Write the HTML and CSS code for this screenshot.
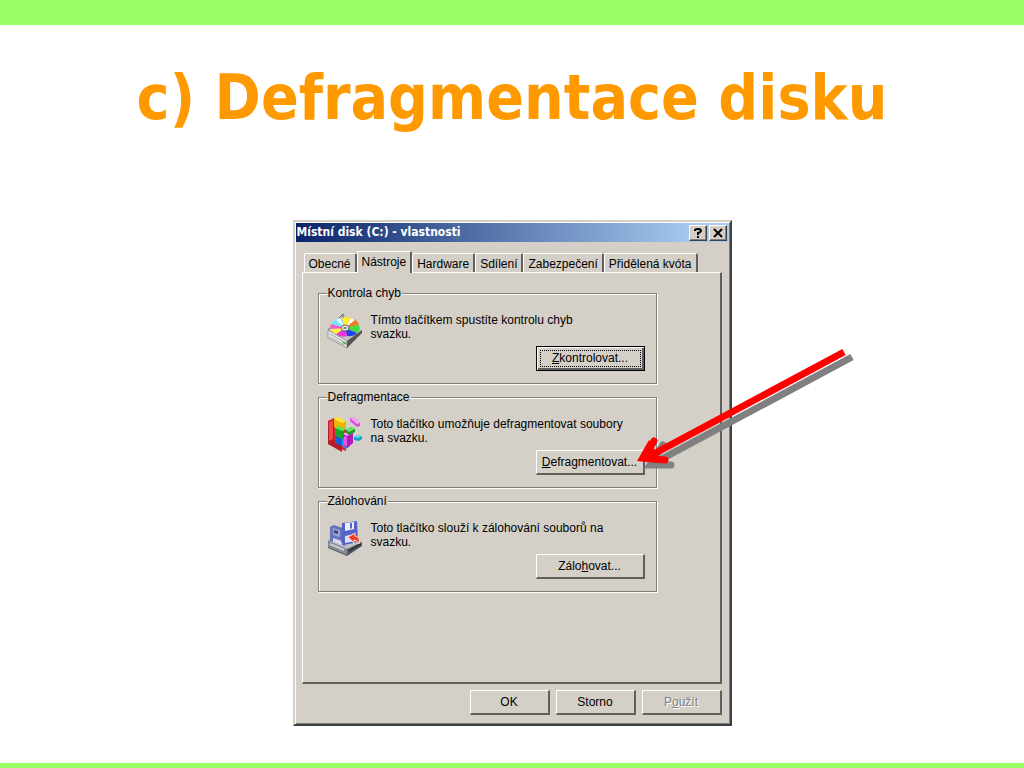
FILE: index.html
```html
<!DOCTYPE html>
<html lang="cs">
<head>
<meta charset="utf-8">
<title>c) Defragmentace disku</title>
<link rel="stylesheet" href="styles.css">
</head>
<body>
<main class="slide">
  <h1 class="slide-title">c) Defragmentace disku</h1>
  <section class="dialog" aria-labelledby="dialog-title">
    <header class="titlebar">
      <h2 class="titlebar-text" id="dialog-title">Místní disk (C:) - vlastnosti</h2>
      <button class="caption-button" type="button" aria-label="Nápověda">
        <svg width="10" height="10" viewBox="0 0 10 10"><path d="M2 3V2Q2 1 5 1T8 3Q8 4 5 5V7M5 8V10" fill="none" stroke="#000" stroke-width="2"/></svg>
      </button>
      <button class="caption-button" type="button" aria-label="Zavřít">
        <svg width="10" height="10" viewBox="0 0 10 10"><path d="M1 1L9 9M9 1L1 9" fill="none" stroke="#000" stroke-width="2"/></svg>
      </button>
    </header>
    <div class="dialog-body">
      <div class="tabs" role="tablist">
        <button class="tab" type="button" role="tab">Obecné</button>
        <button class="tab tab-selected" type="button" role="tab" aria-selected="true">Nástroje</button>
        <button class="tab" type="button" role="tab">Hardware</button>
        <button class="tab" type="button" role="tab">Sdílení</button>
        <button class="tab" type="button" role="tab">Zabezpečení</button>
        <button class="tab" type="button" role="tab">Přidělená kvóta</button>
      </div>
      <div class="panel" role="tabpanel">
        <fieldset class="group">
          <legend class="group-title">Kontrola chyb</legend>
          <svg class="group-icon" viewBox="0 0 36 36" aria-hidden="true">
            <path d="M1 17L16 0L35 17L20 29Z" fill="#c4c5c0"/>
            <path d="M1 17L16 1V5" fill="none" stroke="#666"/>
            <path d="M1 17L20 28V35L1 25Z" fill="#e4e4e4" stroke="#999"/>
            <path d="M20 28L35 17V20L20 35Z" fill="#555"/>
            <path d="M3 21L17 29M3 24L17 32" stroke="#aaa"/>
            <path d="M16 29L19 31" stroke="#3b3" stroke-width="2"/>
            <path d="M18 15L4 11Q8 5 15 5Z" fill="#69e8ff"/>
            <path d="M18 15L15 5Q20 3 24 5Z" fill="#ffee28"/>
            <path d="M18 15L24 5Q31 7 32 12Z" fill="#ef7c24"/>
            <path d="M18 15L32 12Q34 17 30 20Z" fill="#42dc48"/>
            <path d="M18 15L30 20Q26 24 20 23Z" fill="#283ff0"/>
            <path d="M18 15L20 23Q14 25 9 21Z" fill="#ef34dc"/>
            <path d="M18 15L9 21Q2 18 4 11Z" fill="#fff23c"/>
            <path d="M18 15L4 16Q3 13 4 11Z" fill="#f75bd4"/>
            <path d="M9 7L13 5L18 15ZM24 5L28 7L18 15Z" fill="#fff"/>
            <ellipse cx="18" cy="15" rx="4" ry="3" fill="#eee" stroke="#666"/>
            <ellipse cx="18" cy="15" rx="2" ry="1" fill="#777"/>
          </svg>
          <div class="group-content">
            <p class="group-text">Tímto tlačítkem spustíte kontrolu chyb<br>svazku.</p>
            <button class="button button-default" type="button"><span class="button-focus"><u>Z</u>kontrolovat...</span></button>
          </div>
        </fieldset>
        <fieldset class="group">
          <legend class="group-title">Defragmentace</legend>
          <svg class="group-icon" viewBox="0 0 36 36" aria-hidden="true">
            <path d="M1 4L7 1L19 9V34L1 27Z" fill="#e32334"/>
            <path d="M1 4V27L15 35V28L7 23V2Z" fill="#b71d29"/>
            <path d="M2 5L6 3V22L2 24Z" fill="#f04848"/>
            <path d="M7 2L10 0L19 4V12L14 14L7 10Z" fill="#efb400"/>
            <path d="M7 2L10 0L19 4L15 6Z" fill="#ffe83e"/>
            <path d="M8 11L16 14V22L8 19Z" fill="#18a829"/>
            <path d="M8 11L12 9L19 12L16 14Z" fill="#5ce652"/>
            <path d="M8 19L16 22V29L8 26Z" fill="#1260dc"/>
            <path d="M15 22L19 20L23 22V29L19 32L15 29Z" fill="#259cf2"/>
            <path d="M16 17L21 14L26 16V26L20 31L17 29V20Z" fill="#b318bd"/>
            <path d="M16 17L21 14L26 16L20 19Z" fill="#ffa6fa"/>
            <path d="M17 19L20 20V30L17 28Z" fill="#e655e8"/>
            <path d="M19 13L24 10L28 12V15L22 18L19 16Z" fill="#179d24"/>
            <path d="M19 13L24 10L28 12L22 15Z" fill="#68e26b"/>
            <path d="M23 1L26 0L33 6V9L30 10L23 4Z" fill="#d74ee0"/>
            <path d="M23 1L26 0L33 6L30 7Z" fill="#ff9cff"/>
            <path d="M27 20L31 18L35 19V22L32 24L27 23Z" fill="#189fc7"/>
            <path d="M27 20L31 18L35 19L31 21Z" fill="#63dff2"/>
          </svg>
          <div class="group-content">
            <p class="group-text">Toto tlačítko umožňuje defragmentovat soubory<br>na svazku.</p>
            <button class="button" type="button"><u>D</u>efragmentovat...</button>
          </div>
        </fieldset>
        <fieldset class="group">
          <legend class="group-title">Zálohování</legend>
          <svg class="group-icon" viewBox="0 0 36 36" aria-hidden="true">
            <path d="M1 20L7 15L35 21V25L20 35L1 27Z" fill="#555a66"/>
            <path d="M1 20L12 15L35 21L20 28Z" fill="#bfc2c5"/>
            <path d="M1 20L20 28V34L1 26Z" fill="#858a92"/>
            <path d="M3 23L17 29" stroke="#c8cacd" stroke-width="2"/>
            <path d="M22 30L34 23" stroke="#333" stroke-width="2"/>
            <path d="M3 6L7 4L18 8V25L3 20Z" fill="#6674b8"/>
            <path d="M6 7L13 9V16L6 14Z" fill="#9aa4ce"/>
            <path d="M7 9L11 10V13L7 12Z" fill="#374187"/>
            <path d="M6 17L15 20V24L6 21Z" fill="#d5d9ed"/>
            <path d="M15 2L30 0L31 21L17 24L14 21Z" fill="#5662c9"/>
            <path d="M18 2L27 1V8L18 10Z" fill="#eef1ff"/>
            <path d="M23 2L25 2V7L23 8Z" fill="#5663b0"/>
            <path d="M18 15L28 13V20L18 22Z" fill="#dce1f7"/>
            <path d="M21 16L28 12V15Q34 16 32 23Q30 19 27 19V22Z" fill="#f04125" stroke="#ffd6cc" stroke-width="1"/>
          </svg>
          <div class="group-content">
            <p class="group-text">Toto tlačítko slouží k zálohování souborů na<br>svazku.</p>
            <button class="button" type="button">Zálo<u>h</u>ovat...</button>
          </div>
        </fieldset>
      </div>
      <footer class="actions">
        <button class="button action" type="button">OK</button>
        <button class="button action" type="button">Storno</button>
        <button class="button action" type="button" disabled>P<u>o</u>užít</button>
      </footer>
    </div>
    <svg class="pointer" width="230" height="140" viewBox="0 0 230 140" aria-hidden="true">
      <g fill="none" stroke="#808080" stroke-width="7">
        <path d="M222 17L26 122"/>
        <path d="M33 105L20 125L41 125" stroke-linecap="round"/>
      </g>
      <g fill="none" stroke="#f00" stroke-width="7">
        <path d="M214 12L18 117"/>
        <path d="M24 101L14 118L35 120" stroke-linecap="round"/>
      </g>
      <path d="M7 121L19 100L32 123Z" fill="#f00"/>
    </svg>
  </section>
</main>
</body>
</html>
```
FILE: styles.css
```css
* {
  box-sizing: border-box;
}

body {
  margin: 0;
  background: #fff;
}

.slide {
  display: flex;
  flex-direction: column;
  align-items: center;
  min-height: 100vh;
  padding-bottom: 36px;
  border-top: 25px solid #9f6;
  border-bottom: 5px solid #9f6;
}

.slide-title {
  margin: 35px 0 84px;
  color: #f90;
  font: bold 62px/76px "DejaVu Sans Condensed", "DejaVu Sans", sans-serif;
  text-align: center;
}

.dialog {
  position: relative;
  width: 100%;
  max-width: 439px;
  padding: 1px;
  border: 2px solid;
  border-color: #d4d0c8 #404040 #404040 #d4d0c8;
  box-shadow: inset 1px 1px #fff, inset -1px -1px #808080;
  background: #d4d0c8;
  color: #000;
  font: 12px/14px "Liberation Sans", Arial, sans-serif;
}

.titlebar {
  display: flex;
  align-items: center;
  height: 19px;
  padding: 0 2px 0 1px;
  background: linear-gradient(to right, #0a246a, #a6caf0 92%);
}

.titlebar-text {
  flex: 1;
  margin: 0;
  color: #fff;
  font: bold 12px/19px "DejaVu Sans Condensed", "DejaVu Sans", sans-serif;
}

.caption-button {
  display: flex;
  align-items: center;
  justify-content: center;
  width: 18px;
  height: 16px;
  padding: 0;
  border: 1px solid;
  border-color: #fff #404040 #404040 #fff;
  box-shadow: inset -1px -1px #808080;
  background: #d4d0c8;
}

.caption-button + .caption-button {
  margin-left: 2px;
}

.dialog-body {
  padding: 9px 7px 8px 6px;
}

.tabs {
  display: flex;
  align-items: flex-end;
  height: 21px;
  padding: 0 24px 0 2px;
}

.tab {
  flex: auto;
  height: 19px;
  padding: 1px 3px 0;
  border: solid;
  border-width: 1px 2px 0 1px;
  border-color: #fff #606060 #fff #fff;
  border-radius: 2px 2px 0 0;
  background: #d4d0c8;
  color: #000;
  font: inherit;
  white-space: nowrap;
}

.tab-selected {
  z-index: 1;
  height: 22px;
  margin: 0 0 -1px;
  padding-bottom: 3px;
}

.panel {
  min-height: 412px;
  padding: 13px 63px 16px 15px;
  border: solid;
  border-width: 1px 2px 2px 1px;
  border-color: #fff #606060 #606060 #fff;
}

.group {
  display: flex;
  gap: 8px;
  min-width: 0;
  margin: 0 0 6px;
  padding: 13px 11px 12px 8px;
  border: 1px solid #808080;
  box-shadow: inset 1px 1px #fff, 1px 1px #fff;
}

.group-title {
  padding: 0 1px;
  background: #d4d0c8;
}

.group-icon {
  flex: none;
  width: 36px;
  height: 36px;
}

.group-content {
  display: flex;
  flex: 1;
  flex-direction: column;
  align-items: flex-end;
  gap: 5px;
}

.group-text {
  align-self: stretch;
  margin: 0;
}

.button {
  min-width: 109px;
  height: 25px;
  padding: 0 2px;
  border: solid;
  border-width: 1px 2px 2px 1px;
  border-color: #fff #606060 #606060 #fff;
  background: #d4d0c8;
  color: #000;
  font: inherit;
}

.button-default {
  padding: 2px;
  border: 1px solid #000;
  box-shadow: inset 1px 1px #fff, inset -2px -2px #606060;
}

.button-focus {
  display: block;
  margin: 0 1px;
  border: 1px dotted #000;
  line-height: 15px;
}

.actions {
  display: flex;
  justify-content: flex-end;
  gap: 6px;
  padding-top: 6px;
}

.action {
  min-width: 80px;
}

.button:disabled {
  color: #808080;
  text-shadow: 1px 1px #fff;
}

.pointer {
  position: absolute;
  top: 118px;
  left: 335px;
  pointer-events: none;
}
```
